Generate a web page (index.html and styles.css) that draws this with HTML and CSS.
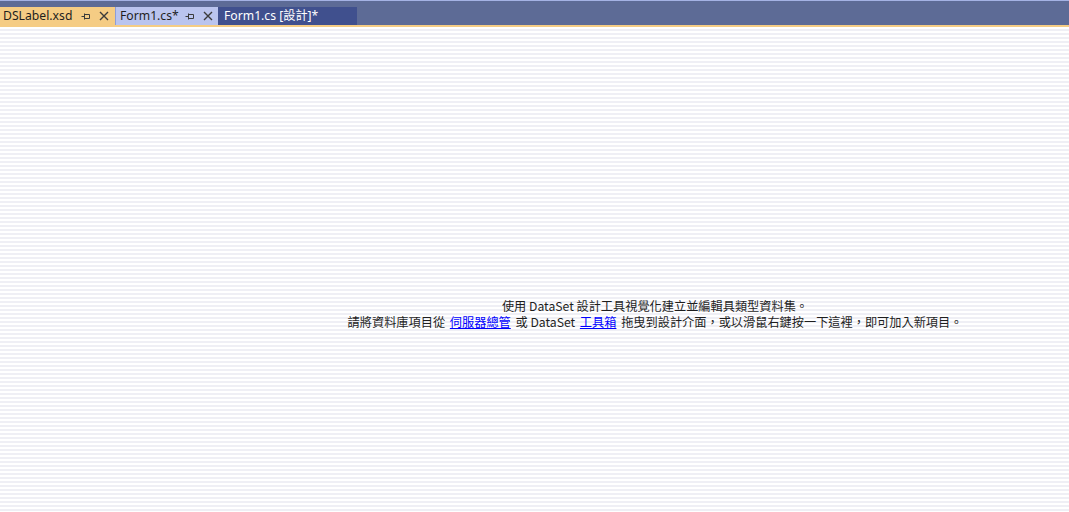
FILE: index.html
```html
<!DOCTYPE html>
<html lang="zh-Hant">
<head>
<meta charset="utf-8">
<link rel="stylesheet" href="styles.css">
</head>
<body>
<div class="window">
  <div class="topline"></div>
  <div class="tabbar">
    <div class="tab tab-active">
      <span class="tab-title">DSLabel.xsd</span>
      <svg class="pin" width="10" height="10" viewBox="0 0 10 10"><path d="M0.5 5.5H3M3.5 2.5V8.5M3.5 3.5H8.5V7.5H3.5" fill="none" stroke="#3b3b3b" stroke-width="1"/></svg>
      <svg class="close" width="10" height="10" viewBox="0 0 10 10"><path d="M1 1L9 9M9 1L1 9" stroke="#3b3b3b" stroke-width="1.4"/></svg>
    </div>
    <div class="tab tab-hover">
      <span class="tab-title">Form1.cs*</span>
      <svg class="pin" width="10" height="10" viewBox="0 0 10 10"><path d="M0.5 5.5H3M3.5 2.5V8.5M3.5 3.5H8.5V7.5H3.5" fill="none" stroke="#3b3b3b" stroke-width="1"/></svg>
      <svg class="close" width="10" height="10" viewBox="0 0 10 10"><path d="M1 1L9 9M9 1L1 9" stroke="#3b3b3b" stroke-width="1.4"/></svg>
    </div>
    <div class="tab tab-inactive">
      <span class="tab-title">Form1.cs [設計]*</span>
    </div>
  </div>
  <div class="accent"></div>
  <div class="designer">
    <div class="message">
      <div class="line">使用 DataSet 設計工具視覺化建立並編輯具類型資料集。</div>
      <div class="line">請將資料庫項目從 <a class="link" href="#">伺服器總管</a> 或 DataSet <a class="link" href="#">工具箱</a> 拖曳到設計介面，或以滑鼠右鍵按一下這裡，即可加入新項目。</div>
    </div>
  </div>
</div>
</body>
</html>
```

FILE: styles.css
```css
html, body {
  margin: 0;
  padding: 0;
  width: 100%;
  height: 100%;
  overflow: hidden;
}

body {
  font-family: "Noto Sans", "Noto Sans CJK TC", sans-serif;
  background: #ffffff;
}

.window {
  display: flex;
  flex-direction: column;
  height: 512px;
  width: 1069px;
}

.topline {
  height: 1px;
  background: #a4b2e4;
}

.tabbar {
  height: 24px;
  background: #5d6b96;
  display: flex;
  align-items: flex-end;
}

.tab {
  height: 18px;
  display: flex;
  align-items: center;
  box-sizing: border-box;
  font-size: 12.2px;
  white-space: nowrap;
}

.tab-title {
  line-height: 18px;
}

.tab-active {
  width: 115px;
  background: #f5cc84;
  color: #1e1e1e;
  padding-left: 3px;
  padding-right: 6px;
}

.tab-hover {
  width: 103px;
  background: #bac4ee;
  color: #1e1e1e;
  padding-left: 4px;
  padding-right: 5px;
  border-left: 1px solid #8e9dd6;
}

.tab-inactive {
  width: 139px;
  background: #40508e;
  color: #ffffff;
  padding-left: 6px;
}

.pin {
  margin-left: auto;
  flex: none;
}

.close {
  margin-left: 8px;
  flex: none;
}

.accent {
  height: 2px;
  background: #f5cc84;
}

.designer {
  flex: 1;
  background: repeating-linear-gradient(to bottom, #ffffff 0px, #ffffff 2px, #efeff5 2px, #efeff5 4px);
  padding-top: 271px;
  padding-left: 241px;
  box-sizing: border-box;
}

.message {
  text-align: center;
  font-family: "Noto Sans CJK TC", sans-serif;
  font-size: 12.2px;
  line-height: 16px;
  color: #1e1e1e;
}

.line {
  white-space: nowrap;
}

.link {
  color: #0000ff;
  text-decoration: underline;
  margin: 0 2px;
}
```
